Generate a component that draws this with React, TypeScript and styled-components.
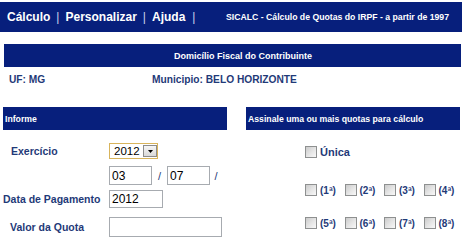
import React from "react";
import styled, { createGlobalStyle } from "styled-components";

const NAVY = "#071f7c";
const INK = "#1f3a78";

const Global = createGlobalStyle`
  html, body { margin: 0; padding: 0; background: #fff; }
  body {
    font-family: "Liberation Sans", Arial, sans-serif;
    width: 465px;
    height: 247px;
    overflow: hidden;
  }
`;

const Page = styled.div`
  width: 465px;
  padding-top: 2px;
`;

const TopBar = styled.header`
  display: flex;
  align-items: center;
  width: 462px;
  height: 30px;
  background: ${NAVY};
  color: #fff;
`;

const Nav = styled.nav`
  display: flex;
  align-items: center;
  width: 226px;
  padding-left: 7px;
  box-sizing: border-box;
  font-size: 12px;
  font-weight: bold;
  white-space: nowrap;
`;

const NavLink = styled.span`
  color: #fff;
`;

const Pipe = styled.span<{ $m?: number }>`
  font-weight: normal;
  color: #c9d2ea;
  margin: 0 ${(p) => p.$m ?? 6}px;
`;

const Title = styled.div`
  font-size: 8.7px;
  font-weight: bold;
  white-space: nowrap;
`;

const Bar = styled.div<{ $center?: boolean }>`
  display: flex;
  align-items: center;
  justify-content: ${(p) => (p.$center ? "center" : "flex-start")};
  height: 23px;
  background: ${NAVY};
  color: #fff;
  font-size: 8.7px;
  font-weight: bold;
  white-space: nowrap;
  box-sizing: border-box;
`;

const DomBar = styled(Bar)`
  margin: 12px 0 0 4px;
  width: 457px;
  font-size: 9px;
  padding-left: 21px;
`;

const InfoRow = styled.div`
  display: grid;
  grid-template-columns: 143px 1fr;
  align-items: center;
  height: 25px;
  padding-left: 9px;
  font-size: 10.2px;
  font-weight: bold;
  color: ${INK};
`;

const Columns = styled.div`
  display: flex;
  gap: 19px;
  margin-top: 15px;
  padding-left: 3px;
`;

const Panel = styled.section<{ $w: number }>`
  width: ${(p) => p.$w}px;
  display: flex;
  flex-direction: column;
`;

const PanelHeader = styled(Bar)`
  padding-left: 2px;
`;

const FormRow = styled.div<{ $top: number; $h: number }>`
  display: grid;
  grid-template-columns: 106px auto;
  align-items: center;
  margin-top: ${(p) => p.$top}px;
  height: ${(p) => p.$h}px;
`;

const Label = styled.label<{ $indent?: number }>`
  padding-left: ${(p) => p.$indent ?? 0}px;
  font-size: 10.5px;
  font-weight: bold;
  color: ${INK};
  white-space: nowrap;
`;

const Field = styled.div`
  display: flex;
  align-items: center;
  height: 100%;
`;

const TextInput = styled.input<{ $w: number }>`
  box-sizing: border-box;
  width: ${(p) => p.$w}px;
  height: 100%;
  margin: 0;
  padding: 0 0 0 2px;
  border: 1px solid #a7abb0;
  background: #fff;
  font-family: "Liberation Sans", Arial, sans-serif;
  font-size: 12px;
  color: #000;
  outline: none;
`;

const Slash = styled.span<{ $w: number }>`
  width: ${(p) => p.$w}px;
  text-align: center;
  font-size: 11px;
  color: ${INK};
`;

const SelectBox = styled.div`
  position: relative;
  box-sizing: border-box;
  width: 49px;
  height: 16px;
  border: 1px solid #d8b45c;
  background: #fff;
`;

const NativeSelect = styled.select`
  appearance: none;
  -webkit-appearance: none;
  display: block;
  width: 100%;
  height: 14px;
  border: none;
  margin: 0;
  padding: 0 0 0 4px;
  background: transparent;
  font-family: "Liberation Sans", Arial, sans-serif;
  font-size: 11.5px;
  line-height: 14px;
  color: #000;
  outline: none;
`;

const ArrowButton = styled.span`
  position: absolute;
  right: 0;
  top: 1px;
  width: 14px;
  height: 12px;
  box-sizing: border-box;
  border: 1px solid #8c8c8c;
  background: linear-gradient(#f6f6f6, #d9d9d9);
  display: flex;
  align-items: center;
  justify-content: center;
  pointer-events: none;
`;

const QuotaBody = styled.div`
  display: flex;
  flex-direction: column;
  padding-left: 59px;
`;

const CheckRow = styled.div<{ $top: number }>`
  display: grid;
  grid-template-columns: repeat(4, 39.5px);
  align-items: center;
  margin-top: ${(p) => p.$top}px;
  height: 12px;
`;

const CheckItem = styled.label<{ $big?: boolean }>`
  display: flex;
  align-items: center;
  gap: 3px;
  font-size: ${(p) => (p.$big ? 11 : 10)}px;
  font-weight: bold;
  color: ${INK};
  white-space: nowrap;
`;

const Box = styled.input`
  appearance: none;
  -webkit-appearance: none;
  flex: none;
  width: 12px;
  height: 12px;
  margin: 0;
  box-sizing: border-box;
  border: 1px solid #8e9090;
  background: linear-gradient(135deg, #cbcbcb 0%, #e6e6e6 55%, #f8f8f8 100%);
`;

const quotas = [
  ["1ª", "2ª", "3ª", "4ª"],
  ["5ª", "6ª", "7ª", "8ª"],
];

export default function App() {
  return (
    <Page>
      <Global />
      <TopBar>
        <Nav>
          <NavLink>Cálculo</NavLink>
          <Pipe>|</Pipe>
          <NavLink>Personalizar</NavLink>
          <Pipe>|</Pipe>
          <NavLink>Ajuda</NavLink>
          <Pipe $m={7}>|</Pipe>
        </Nav>
        <Title>SICALC - Cálculo de Quotas do IRPF - a partir de 1997</Title>
      </TopBar>

      <DomBar $center>Domicílio Fiscal do Contribuinte</DomBar>

      <InfoRow>
        <span>UF: MG</span>
        <span>Municipio: BELO HORIZONTE</span>
      </InfoRow>

      <Columns>
        <Panel $w={224}>
          <PanelHeader>Informe</PanelHeader>
          <FormRow $top={13} $h={16}>
            <Label $indent={8}>Exercício</Label>
            <Field>
              <SelectBox>
                <NativeSelect defaultValue="2012">
                  <option value="2012">2012</option>
                  <option value="2011">2011</option>
                </NativeSelect>
                <ArrowButton>
                  <svg width="5" height="3" viewBox="0 0 5 3">
                    <path d="M0 0H5L2.5 3Z" fill="#000" />
                  </svg>
                </ArrowButton>
              </SelectBox>
            </Field>
          </FormRow>
          <FormRow $top={7} $h={19}>
            <span />
            <Field>
              <TextInput $w={43} defaultValue="03" />
              <Slash $w={15}>/</Slash>
              <TextInput $w={43} defaultValue="07" />
              <Slash $w={12}>/</Slash>
            </Field>
          </FormRow>
          <FormRow $top={5} $h={18}>
            <Label>Data de Pagamento</Label>
            <Field>
              <TextInput $w={54} defaultValue="2012" />
            </Field>
          </FormRow>
          <FormRow $top={9} $h={20}>
            <Label $indent={7}>Valor da Quota</Label>
            <Field>
              <TextInput $w={113} defaultValue="" />
            </Field>
          </FormRow>
        </Panel>

        <Panel $w={214}>
          <PanelHeader>Assinale uma ou mais quotas para cálculo</PanelHeader>
          <QuotaBody>
            <CheckRow $top={16}>
              <CheckItem $big>
                <Box type="checkbox" />
                Única
              </CheckItem>
            </CheckRow>
            {quotas.map((row, i) => (
              <CheckRow key={i} $top={i === 0 ? 26 : 21}>
                {row.map((q) => (
                  <CheckItem key={q}>
                    <Box type="checkbox" />({q})
                  </CheckItem>
                ))}
              </CheckRow>
            ))}
          </QuotaBody>
        </Panel>
      </Columns>
    </Page>
  );
}
